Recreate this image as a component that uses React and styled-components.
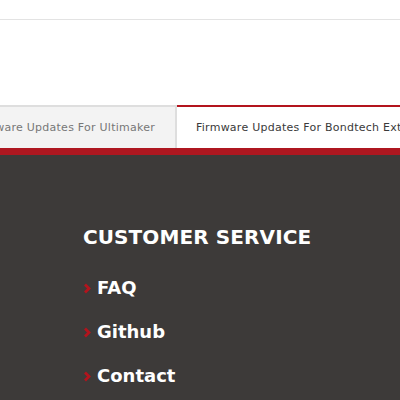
import styled, { createGlobalStyle } from "styled-components";

const GlobalStyle = createGlobalStyle`
  html, body {
    margin: 0;
    padding: 0;
    background: #fff;
    font-family: "DejaVu Sans", "Liberation Sans", sans-serif;
  }
`;

const Page = styled.div`
  width: 400px;
  height: 400px;
  overflow: hidden;
  display: flex;
  flex-direction: column;
`;

const TopSpace = styled.div`
  height: 19px;
  border-bottom: 1px solid #e3e3e3;
`;

const Blank = styled.div`
  height: 85px;
`;

const TabRow = styled.div`
  display: flex;
  height: 43px;
  overflow: hidden;
`;

const Tab = styled.div`
  flex: 0 0 ${(p) => p.$width};
  box-sizing: border-box;
  display: flex;
  align-items: center;
  justify-content: ${(p) => (p.$active ? "flex-start" : "flex-end")};
  padding: ${(p) => (p.$active ? "0 0 0 19px" : "0 20px 0 0")};
  background: ${(p) => (p.$active ? "#fff" : "#f3f3f3")};
  border-top: 2px solid ${(p) => (p.$active ? "#b3141d" : "#dedede")};
  border-right: ${(p) => (p.$active ? "none" : "2px solid #dedede")};
  color: ${(p) => (p.$active ? "#3a3a3a" : "#777")};
  font-size: 11px;
  letter-spacing: 0.25px;
  white-space: nowrap;
  overflow: hidden;
`;

const RedBar = styled.div`
  height: 7px;
  background: #ae1720;
`;

const Footer = styled.footer`
  flex: 1;
  background: #3d3a39;
  padding: 70px 0 0 83px;
`;

const Heading = styled.h3`
  margin: 0 0 28px;
  color: #fff;
  font-size: 20px;
  line-height: 24px;
  font-weight: 700;
  letter-spacing: 0.1px;
`;

const LinkList = styled.ul`
  list-style: none;
  margin: 0;
  padding: 0;
  display: flex;
  flex-direction: column;
  gap: 22px;
`;

const LinkItem = styled.li`
  display: flex;
  align-items: center;
  gap: 6px;
  color: #fff;
  font-size: 18px;
  line-height: 22px;
  font-weight: 700;
`;

const Chevron = () => (
  <svg width="8" height="11" viewBox="0 0 8 11">
    <path d="M2 1.5 L6 5.5 L2 9.5" fill="none" stroke="#b3141d" strokeWidth="2.8" />
  </svg>
);

const links = ["FAQ", "Github", "Contact"];

export default function App() {
  return (
    <Page>
      <GlobalStyle />
      <TopSpace />
      <Blank />
      <TabRow>
        <Tab $width="177px">Firmware Updates For Ultimaker</Tab>
        <Tab $width="223px" $active>
          Firmware Updates For Bondtech Extruders
        </Tab>
      </TabRow>
      <RedBar />
      <Footer>
        <Heading>CUSTOMER SERVICE</Heading>
        <LinkList>
          {links.map((l) => (
            <LinkItem key={l}>
              <Chevron />
              {l}
            </LinkItem>
          ))}
        </LinkList>
      </Footer>
    </Page>
  );
}
